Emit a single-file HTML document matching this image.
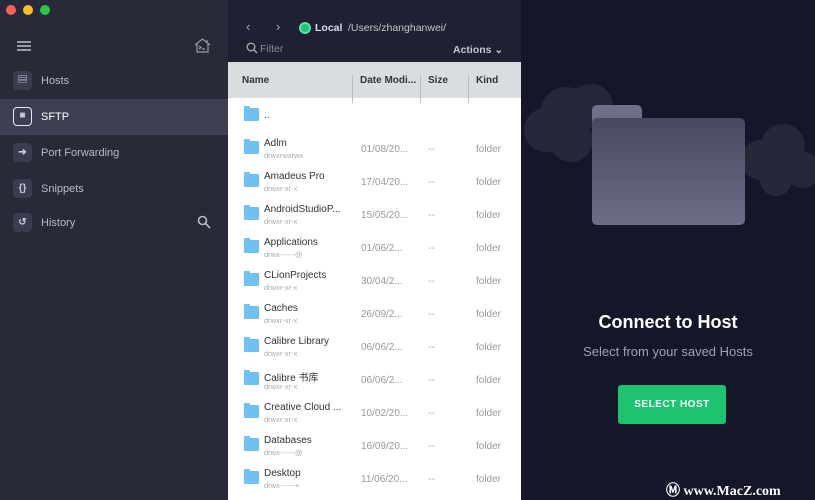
<!DOCTYPE html>
<html><head><meta charset="utf-8"><style>
*{margin:0;padding:0;box-sizing:border-box}
body{width:815px;height:500px;overflow:hidden;font-family:"Liberation Sans","Noto Sans CJK SC",sans-serif;position:relative;background:#141527}
.side{position:absolute;left:0;top:0;width:228px;height:500px;background:#282a3a}
.dot{position:absolute;top:5px;width:10px;height:10px;border-radius:50%}
.nav{position:absolute;left:0;width:228px;height:36px;color:#b9bbc8;font-size:11px}
.nav .ic{position:absolute;left:13px;top:8px;width:19px;height:19px;border-radius:4px;background:#3b3d4e;color:#c8cad5;font-size:10px;text-align:center;line-height:19px;font-weight:bold}
.nav span.t{position:absolute;left:41px;top:12px}
.mid{position:absolute;left:228px;top:0;width:293px;height:500px;background:#fff}
.tb{position:absolute;left:0;top:0;width:293px;height:62px;background:#1f2031;color:#c4c6d2;font-size:10.5px}
.hd{position:absolute;left:0;top:62px;width:293px;height:36px;background:#d9dde0;font-size:10px;font-weight:bold;color:#333}
.hd div{position:absolute;top:13px}
.sep{position:absolute;top:4px;width:1px;height:28px;background:#b8bcc0}
.row{position:absolute;left:0;width:293px;height:33px;font-size:10px}
.fold{position:absolute;left:16px;top:9px;width:15px;height:13px;background:#6fc2f0;border-radius:1px}
.fold:before{content:"";position:absolute;left:0;top:-2px;width:6px;height:3px;background:#6fc2f0;border-radius:1px 1px 0 0}
.n{position:absolute;left:36px;top:6px;color:#333}
.p{position:absolute;left:36px;top:19px;color:#aaa;font-size:7.5px}
.d{position:absolute;left:133px;top:12px;color:#999}
.s{position:absolute;left:200px;top:12px;color:#aaa}
.k{position:absolute;left:248px;top:12px;color:#999}
</style></head><body>
<div class="side">
<div class="dot" style="left:6px;background:#fc5f57"></div>
<div class="dot" style="left:23px;background:#febc2e"></div>
<div class="dot" style="left:40px;background:#28c840"></div>
<div style="position:absolute;left:17px;top:41px;width:14px;height:1.5px;background:#9a9cab;box-shadow:0 4px 0 #9a9cab,0 8px 0 #9a9cab"></div>
<svg style="position:absolute;left:194px;top:38px" width="17" height="15" viewBox="0 0 17 15" fill="none" stroke="#9a9cab" stroke-width="1.2"><path d="M1 7L8.5 1 16 7M3 6v8h11V6M5 8l2 1.5-2 1.5M8 11h3M13 2v3"/></svg>
<div class="nav" style="top:63px"><div class="ic">▤</div><span class="t">Hosts</span></div>
<div class="nav" style="top:99px;background:#3d3f52;color:#fff"><div class="ic" style="background:#3d3f52;border:1.5px solid #e8e8ee;line-height:16px">■</div><span class="t">SFTP</span></div>
<div class="nav" style="top:135px"><div class="ic">➜</div><span class="t">Port Forwarding</span></div>
<div class="nav" style="top:171px"><div class="ic">{}</div><span class="t">Snippets</span></div>
<div class="nav" style="top:205px"><div class="ic">↺</div><span class="t">History</span>
<svg style="position:absolute;left:197px;top:10px" width="14" height="14" fill="none" stroke="#b9bbc8" stroke-width="1.6"><circle cx="5.5" cy="5.5" r="4"/><path d="M8.5 8.5L13 13"/></svg></div>
</div>
<div class="mid">
<div class="tb">
<div style="position:absolute;left:18px;top:19px;font-size:13px;color:#aaa">‹</div>
<div style="position:absolute;left:48px;top:19px;font-size:13px;color:#aaa">›</div>
<div style="position:absolute;left:71px;top:22px;width:12px;height:12px;border-radius:50%;background:#1ec57a;border:2px solid #5ee0a0"></div>
<div style="position:absolute;left:87px;top:22px;font-weight:bold;color:#dde">Local</div>
<div style="position:absolute;left:120px;top:22px">/Users/zhanghanwei/</div>
<svg style="position:absolute;left:18px;top:42px" width="12" height="12" fill="none" stroke="#aaa" stroke-width="1.4"><circle cx="5" cy="5" r="3.8"/><path d="M7.8 7.8L11 11"/></svg>
<div style="position:absolute;left:32px;top:43px;color:#8a8c9a">Filter</div>
<div style="position:absolute;left:225px;top:44px;font-weight:bold;color:#c4c6d2">Actions ⌄</div>
</div>
<div class="hd"><div style="left:14px">Name</div><div class="sep" style="left:124px"></div><div style="left:132px">Date Modi...</div><div class="sep" style="left:192px"></div><div style="left:200px">Size</div><div class="sep" style="left:240px"></div><div style="left:248px">Kind</div></div>
<div class="row" style="top:99px"><div class="fold"></div><div class="n" style="top:11px">..</div></div>
<div class="row" style="top:132px"><div class="fold"></div><div class="n">Adlm</div><div class="p">drwxrwxrwx</div><div class="d">01/08/20...</div><div class="s">--</div><div class="k">folder</div></div>
<div class="row" style="top:165px"><div class="fold"></div><div class="n">Amadeus Pro</div><div class="p">drwxr-xr-x</div><div class="d">17/04/20...</div><div class="s">--</div><div class="k">folder</div></div>
<div class="row" style="top:198px"><div class="fold"></div><div class="n">AndroidStudioP...</div><div class="p">drwxr-xr-x</div><div class="d">15/05/20...</div><div class="s">--</div><div class="k">folder</div></div>
<div class="row" style="top:231px"><div class="fold"></div><div class="n">Applications</div><div class="p">drwx------@</div><div class="d">01/06/2...</div><div class="s">--</div><div class="k">folder</div></div>
<div class="row" style="top:264px"><div class="fold"></div><div class="n">CLionProjects</div><div class="p">drwxr-xr-x</div><div class="d">30/04/2...</div><div class="s">--</div><div class="k">folder</div></div>
<div class="row" style="top:297px"><div class="fold"></div><div class="n">Caches</div><div class="p">drwxr-xr-x</div><div class="d">26/09/2...</div><div class="s">--</div><div class="k">folder</div></div>
<div class="row" style="top:330px"><div class="fold"></div><div class="n">Calibre Library</div><div class="p">drwxr-xr-x</div><div class="d">06/06/2...</div><div class="s">--</div><div class="k">folder</div></div>
<div class="row" style="top:363px"><div class="fold"></div><div class="n">Calibre 书库</div><div class="p">drwxr-xr-x</div><div class="d">06/06/2...</div><div class="s">--</div><div class="k">folder</div></div>
<div class="row" style="top:396px"><div class="fold"></div><div class="n">Creative Cloud ...</div><div class="p">drwxr-xr-x</div><div class="d">10/02/20...</div><div class="s">--</div><div class="k">folder</div></div>
<div class="row" style="top:429px"><div class="fold"></div><div class="n">Databases</div><div class="p">drwx------@</div><div class="d">16/09/20...</div><div class="s">--</div><div class="k">folder</div></div>
<div class="row" style="top:462px"><div class="fold"></div><div class="n">Desktop</div><div class="p">drwx------+</div><div class="d">11/06/20...</div><div class="s">--</div><div class="k">folder</div></div>
</div>
<div style="position:absolute;left:521px;top:0;width:294px;height:500px;background:#15162a">
<svg style="position:absolute;left:0;top:70px" width="294" height="140"><g fill="#26283a"><circle cx="25" cy="60" r="22"/><circle cx="45" cy="42" r="25"/><circle cx="70" cy="36" r="22"/><circle cx="50" cy="70" r="22"/><circle cx="240" cy="90" r="20"/><circle cx="262" cy="76" r="22"/><circle cx="282" cy="100" r="18"/><circle cx="255" cy="110" r="16"/></g></svg>
<div style="position:absolute;left:71px;top:105px;width:50px;height:20px;background:#6e7088;border-radius:5px 5px 0 0"></div>
<div style="position:absolute;left:71px;top:118px;width:153px;height:107px;border-radius:5px;background:linear-gradient(#474960,#6c6e88)"></div>
<div style="position:absolute;left:0;top:312px;width:294px;text-align:center;color:#fff;font-size:18px;font-weight:bold">Connect to Host</div>
<div style="position:absolute;left:0;top:344px;width:294px;text-align:center;color:#a0a2b4;font-size:13px">Select from your saved Hosts</div>
<div style="position:absolute;left:97px;top:385px;width:108px;height:39px;background:#1dc36f;border-radius:3px;color:#fff;font-size:10px;font-weight:bold;text-align:center;line-height:39px;letter-spacing:.5px">SELECT HOST</div>
<div style="position:absolute;left:145px;top:480px;color:#fff;font-family:'Liberation Serif',serif;font-weight:bold;font-size:14px">Ⓜ www.MacZ.com</div>
</div>
</body></html>
